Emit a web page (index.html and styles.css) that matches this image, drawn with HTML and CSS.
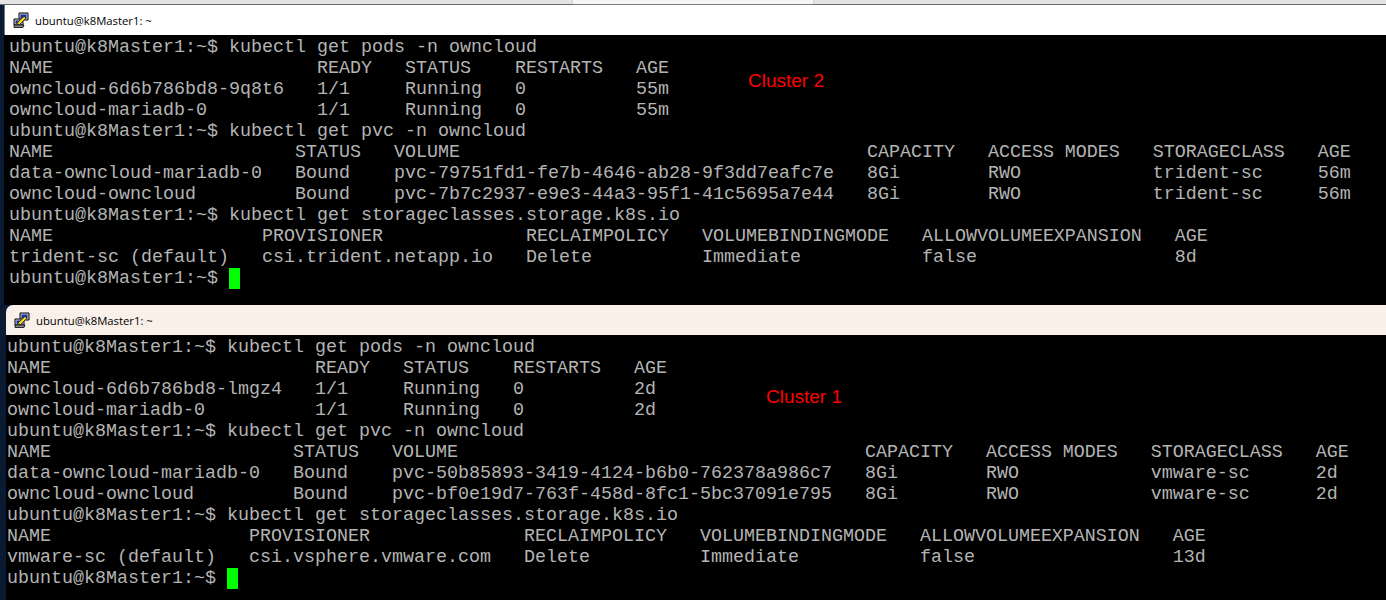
FILE: index.html
```html
<!DOCTYPE html>
<html lang="en">
<head>
<meta charset="utf-8">
<title>ubuntu@k8Master1: ~</title>
<link rel="stylesheet" href="styles.css">
</head>
<body>
<svg class="defs" width="0" height="0" aria-hidden="true">
  <symbol id="putty" viewBox="0 0 16 16">
    <path d="M6 1h9v7H6z" fill="#c8c8d8" stroke="#000"/>
    <path d="M7.500 2.500h6v4h-6z" fill="#1c2fa8"/>
    <path d="M1 7h9v6H1z" fill="#c8c8d8" stroke="#000"/>
    <path d="M2.500 8.500h6v3h-6z" fill="#1c2fa8"/>
    <path d="M1 13h10l-1 2.500H1z" fill="#8a8a8a" stroke="#000" stroke-width=".8"/>
    <path d="M3.500 11.500 11 4.500l2 1.500-6.500 6.500z" fill="#f6e21a" stroke="#000" stroke-width=".6"/>
  </symbol>
</svg>
<div class="tabs">
  <span class="tab"></span>
  <span class="tab tab-active"></span>
  <span class="tab"></span>
</div>
<section class="window win-one">
  <header class="title title-white">
    <svg class="icon"><use href="#putty"/></svg>
    <span>ubuntu@k8Master1: ~</span>
  </header>
  <div class="term">
<pre>ubuntu@k8Master1:~$ kubectl get pods -n owncloud
NAME                        READY   STATUS    RESTARTS   AGE
owncloud-6d6b786bd8-9q8t6   1/1     Running   0          55m
owncloud-mariadb-0          1/1     Running   0          55m
ubuntu@k8Master1:~$ kubectl get pvc -n owncloud
NAME                      STATUS   VOLUME                                     CAPACITY   ACCESS MODES   STORAGECLASS   AGE
data-owncloud-mariadb-0   Bound    pvc-79751fd1-fe7b-4646-ab28-9f3dd7eafc7e   8Gi        RWO            trident-sc     56m
owncloud-owncloud         Bound    pvc-7b7c2937-e9e3-44a3-95f1-41c5695a7e44   8Gi        RWO            trident-sc     56m
ubuntu@k8Master1:~$ kubectl get storageclasses.storage.k8s.io
NAME                   PROVISIONER             RECLAIMPOLICY   VOLUMEBINDINGMODE   ALLOWVOLUMEEXPANSION   AGE
trident-sc (default)   csi.trident.netapp.io   Delete          Immediate           false                  8d
ubuntu@k8Master1:~$ <span class="cursor"> </span></pre>
    <span class="note note-two">Cluster 2</span>
  </div>
</section>
<section class="window win-two">
  <header class="title title-cream">
    <svg class="icon"><use href="#putty"/></svg>
    <span>ubuntu@k8Master1: ~</span>
  </header>
  <div class="term">
<pre>ubuntu@k8Master1:~$ kubectl get pods -n owncloud
NAME                        READY   STATUS    RESTARTS   AGE
owncloud-6d6b786bd8-lmgz4   1/1     Running   0          2d
owncloud-mariadb-0          1/1     Running   0          2d
ubuntu@k8Master1:~$ kubectl get pvc -n owncloud
NAME                      STATUS   VOLUME                                     CAPACITY   ACCESS MODES   STORAGECLASS   AGE
data-owncloud-mariadb-0   Bound    pvc-50b85893-3419-4124-b6b0-762378a986c7   8Gi        RWO            vmware-sc      2d
owncloud-owncloud         Bound    pvc-bf0e19d7-763f-458d-8fc1-5bc37091e795   8Gi        RWO            vmware-sc      2d
ubuntu@k8Master1:~$ kubectl get storageclasses.storage.k8s.io
NAME                  PROVISIONER              RECLAIMPOLICY   VOLUMEBINDINGMODE   ALLOWVOLUMEEXPANSION   AGE
vmware-sc (default)   csi.vsphere.vmware.com   Delete          Immediate           false                  13d
ubuntu@k8Master1:~$ <span class="cursor"> </span></pre>
    <span class="note note-one">Cluster 1</span>
  </div>
</section>
</body>
</html>
```
FILE: styles.css
```css
html, body {
  margin: 0;
  height: 600px;
  overflow: hidden;
  background: #0b1a33;
}
.defs { position: absolute; }
.tabs {
  height: 4px;
  display: flex;
  background: #e4e4e4;
  border-bottom: 1px solid #6a6a6a;
}
.tab { width: 757px; }
.tab-active { width: 240px; flex: none; background: #f5f5f5; box-shadow: 0 0 2px #aaa; }
.window { display: flex; flex-direction: column; }
.win-one { margin-left: 4px; height: 300px; }
.win-two { margin-left: 6px; height: 295px; }
.title {
  height: 30px;
  flex: none;
  display: flex;
  align-items: center;
  font: 11.3px "Open Sans", "Noto Sans", sans-serif;
  color: #000;
}
.title-white { background: #fff; padding-left: 8px; border-left: 1px solid #777; }
.title-cream { background: #f9f0ea; padding-left: 8px; border-top-left-radius: 7px; }
.icon { width: 16px; height: 16px; margin-right: 6px; flex: none; }
.term {
  position: relative;
  flex: 1;
  background: #000;
  overflow: hidden;
}
pre {
  margin: 0;
  padding-top: 2px;
  font: 18.33px/21px "Liberation Mono", "Courier New", monospace;
  color: #b4b4b4;
}
.win-one pre { padding-left: 5px; }
.win-two pre { padding-left: 1px; }
.cursor { background: #0f0; }
.note {
  position: absolute;
  font: 19px "Liberation Sans", Arial, sans-serif;
  color: #f00;
}
.note-two { left: 744px; top: 35px; }
.note-one { left: 760px; top: 51px; }
```
